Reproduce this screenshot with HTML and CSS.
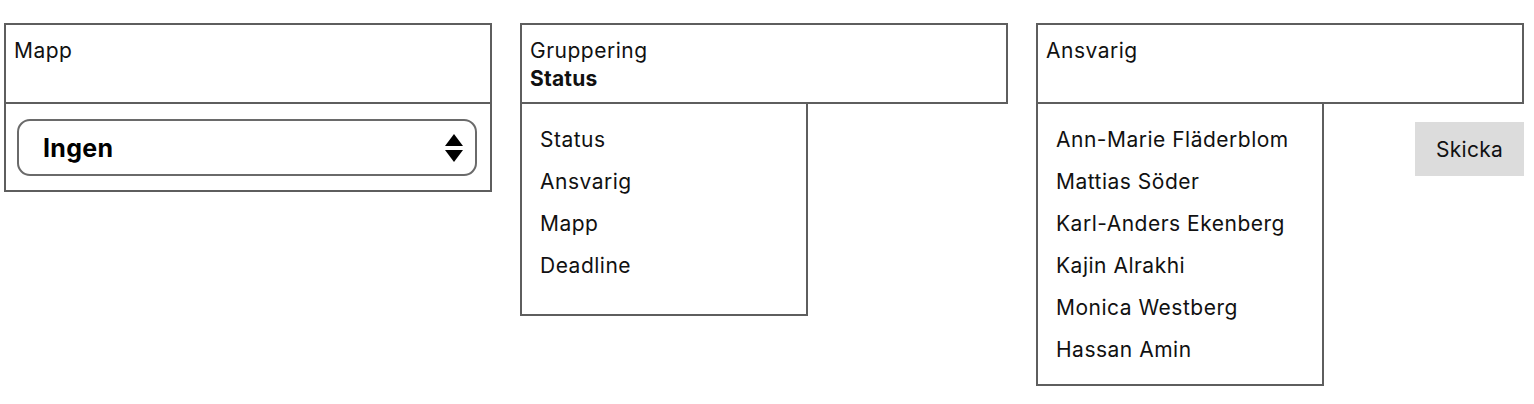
FILE: index.html
```html
<!DOCTYPE html>
<html lang="sv">
<head>
<meta charset="utf-8">
<title>Filter</title>
<link rel="stylesheet" href="styles.css">
</head>
<body>
<div class="page">
  <section class="col">
    <div class="head"><div class="label">Mapp</div></div>
    <div class="body">
      <div class="select">
        <span class="select-value">Ingen</span>
        <svg class="select-arrows" width="18" height="28" viewBox="0 0 18 28"><polygon points="9,0 18,12 0,12" fill="#000"/><polygon points="0,16 18,16 9,28" fill="#000"/></svg>
      </div>
    </div>
  </section>
  <section class="col">
    <div class="head"><div class="label">Gruppering</div><div class="value">Status</div></div>
    <ul class="menu menu-short">
      <li>Status</li>
      <li>Ansvarig</li>
      <li>Mapp</li>
      <li>Deadline</li>
    </ul>
  </section>
  <section class="col">
    <div class="head"><div class="label">Ansvarig</div></div>
    <div class="row">
      <ul class="menu">
        <li>Ann-Marie Fläderblom</li>
        <li>Mattias Söder</li>
        <li>Karl-Anders Ekenberg</li>
        <li>Kajin Alrakhi</li>
        <li>Monica Westberg</li>
        <li>Hassan Amin</li>
      </ul>
      <button class="btn">Skicka</button>
    </div>
  </section>
</div>
</body>
</html>
```
FILE: styles.css
```css
html, body {
  margin: 0;
  padding: 0;
  background: #fff;
}
body {
  font-family: Inter, "Open Sans", sans-serif;
  font-size: 21px;
  letter-spacing: 0.5px;
  color: #111;
}
.page {
  display: flex;
  gap: 28px;
  padding: 23px 10px 0 4px;
  align-items: flex-start;
}
.col {
  width: 488px;
  flex: 0 0 488px;
  display: flex;
  flex-direction: column;
}
.head {
  height: 81px;
  box-sizing: border-box;
  border: 2px solid #5e5e5e;
  padding: 12px 8px 0;
  line-height: 28px;
}
.value {
  font-weight: 700;
  letter-spacing: 0.2px;
}
.body {
  border: 2px solid #5e5e5e;
  border-top: none;
  padding: 15px 13px 14px 11px;
}
.select {
  height: 57px;
  box-sizing: border-box;
  border: 2px solid #6a6a6a;
  border-radius: 13px;
  display: flex;
  align-items: center;
  justify-content: space-between;
  padding: 0 12px 0 24px;
}
.select-value {
  font-size: 25px;
  font-weight: 700;
  letter-spacing: 0.3px;
  color: #000;
}
.menu {
  list-style: none;
  margin: 0;
  width: 288px;
  box-sizing: border-box;
  border: 2px solid #5e5e5e;
  border-top: none;
  padding: 15px 0 13px 18px;
}
.menu-short {
  padding-bottom: 27px;
}
.menu li {
  line-height: 42px;
}
.row {
  display: flex;
  justify-content: space-between;
  align-items: flex-start;
}
.btn {
  margin-top: 18px;
  width: 109px;
  height: 54px;
  border: none;
  background: #dcdcdc;
  font-family: Inter, "Open Sans", sans-serif;
  font-size: 21px;
  letter-spacing: 0.3px;
  color: #111;
  padding: 0;
}
```
